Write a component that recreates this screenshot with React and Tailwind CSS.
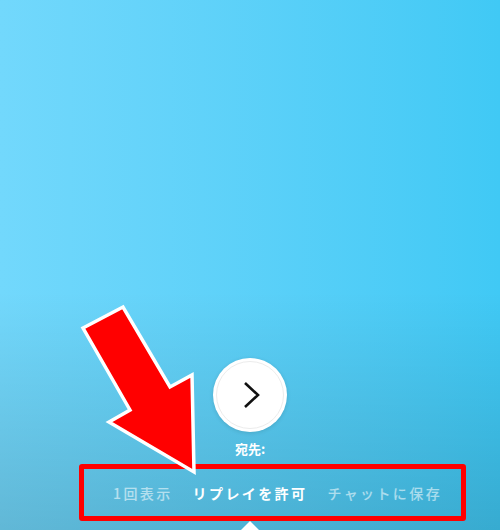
import React from 'react';

const FONT = { fontFamily: '"Noto Sans CJK JP", "Noto Sans", sans-serif' };

function Arrow() {
  return (
    <svg
      className="absolute inset-0 pointer-events-none"
      width="500"
      height="530"
      viewBox="0 0 500 530"
    >
      <polygon
        points="83,328 123,307 170,387 192,375 194,472 109,422 130,410"
        fill="#ff0000"
        stroke="#ffffff"
        strokeWidth="3.5"
        strokeLinejoin="miter"
      />
    </svg>
  );
}

export default function App() {
  const modes = [
    { label: '1回表示', active: false },
    { label: 'リプレイを許可', active: true },
    { label: 'チャットに保存', active: false },
  ];

  return (
    <div
      className="relative w-[500px] h-[530px] overflow-hidden bg-gradient-to-r from-[#72d8fc] to-[#40c9f5]"
      style={FONT}
    >
      {/* darker fade towards the bottom */}
      <div className="absolute inset-0 bg-gradient-to-b from-transparent from-[55%] to-[#000000]/15" />

      <div className="relative flex flex-col items-center h-full pt-[358px]">
        {/* next button */}
        <div className="w-[74px] h-[74px] rounded-full bg-white shadow-[0_1px_4px_rgba(0,0,0,0.12)] flex items-center justify-center">
          <div className="w-[68px] h-[68px] rounded-full border border-[#ececec] flex items-center justify-center">
            <svg width="24" height="28" viewBox="0 0 24 28" className="ml-[1px]">
              <path
                d="M6 2 L19 14 L6 26"
                fill="none"
                stroke="#111111"
                strokeWidth="2.6"
              />
            </svg>
          </div>
        </div>

        <p className="mt-[9px] text-[13px] leading-[16px] font-bold text-white">
          宛先:
        </p>

        {/* mode selector */}
        <div className="mt-[7px] self-start ml-[79px] w-[387px] h-[57px] border-[5px] border-[#ff0000] rounded-[3px] flex items-center pl-[29px] gap-[20px]">
          {modes.map((m) => (
            <span
              key={m.label}
              className={`text-[14px] leading-none tracking-[2.4px] ${
                m.active ? 'font-bold text-white' : 'font-medium text-white/55'
              }`}
            >
              {m.label}
            </span>
          ))}
        </div>

        <svg width="18" height="9" viewBox="0 0 18 9">
          <polygon points="9,0 18,9 0,9" fill="#ffffff" />
        </svg>
      </div>

      <Arrow />
    </div>
  );
}
